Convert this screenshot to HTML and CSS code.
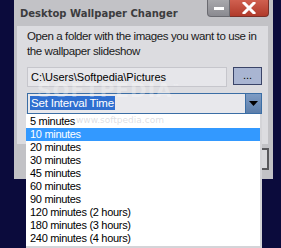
FILE: index.html
```html
<!DOCTYPE html>
<html lang="en">
<head>
    <link rel="stylesheet" href="styles.css">
    <meta charset="UTF-8">
    <title>Desktop Wallpaper Changer</title>
</head>
<body>
    <div class="window">
        <div class="titlebar">
            <div class="title">Desktop Wallpaper Changer</div>
            <div class="caption-buttons">
                <div class="btn-min"><span class="dash"></span></div>
                <div class="btn-close">
                    <svg width="14" height="12" viewBox="0 0 14 12">
                        <path d="M2 1 L12 11 M12 1 L2 11" stroke="#fff" stroke-width="3" stroke-linecap="square"/>
                    </svg>
                </div>
            </div>
        </div>
        <div class="client">
            <p class="intro">Open a folder with the images you want to use in<br>the wallpaper slideshow</p>
            <div class="folder-row">
                <div class="path">C:\Users\Softpedia\Pictures</div>
                <div class="browse">...</div>
            </div>
            <div class="combo">
                <div class="combo-text"><span class="selected">Set Interval Time</span></div>
                <div class="combo-arrow">
                    <svg width="9" height="5" viewBox="0 0 9 5"><path d="M0 0 H9 L4.5 5 Z" fill="#000"/></svg>
                </div>
            </div>
        </div>
        <div class="footer">
            <div class="footer-btn"></div>
        </div>

        <ul class="dropdown">
            <li>5 minutes</li>
            <li class="hover">10 minutes</li>
            <li>20 minutes</li>
            <li>30 minutes</li>
            <li>45 minutes</li>
            <li>60 minutes</li>
            <li>90 minutes</li>
            <li>120 minutes (2 hours)</li>
            <li>180 minutes (3 hours)</li>
            <li>240 minutes (4 hours)</li>
        </ul>

        <div class="watermark">SOFTPEDIA<sup>™</sup></div>
        <div class="watermark-url">www.softpedia.com</div>
    </div>
</body>
</html>
```

FILE: styles.css
```css
* {
    box-sizing: border-box;
}

body {
    margin: 0;
    width: 281px;
    height: 248px;
    overflow: hidden;
    background-color: #0b0b3c;
    font-family: "Liberation Sans", Arial, sans-serif;
    font-size: 11px;
    color: #000;
}

.window {
    position: relative;
    margin-left: 14px;
    width: 259px;
    height: 179px;
    background-color: #c2c2c6;
}

.titlebar {
    display: flex;
    justify-content: space-between;
    height: 26px;
}

.title {
    padding: 8px 0 0 6px;
    font-family: "DejaVu Sans", sans-serif;
    font-weight: bold;
    font-size: 10px;
    color: #3c3c3e;
}

.caption-buttons {
    display: flex;
    height: 17px;
    margin-right: 4px;
}

.btn-min {
    width: 23px;
    display: flex;
    align-items: center;
    justify-content: center;
    background: linear-gradient(#a8a8ac, #8a8a90);
    border: 1px solid #6a6a70;
    border-top: none;
    border-radius: 0 0 0 4px;
}

.dash {
    width: 10px;
    height: 3px;
    background-color: #fff;
}

.btn-close {
    width: 39px;
    display: flex;
    align-items: center;
    justify-content: center;
    background: linear-gradient(#d06050, #b03a2a);
    border: 1px solid #7a3028;
    border-top: none;
    border-left: none;
    border-radius: 0 0 4px 0;
}

.client {
    margin: 0 5px 0 3px;
    height: 118px;
    padding: 3px 0 0 10px;
    background-color: #dcdce0;
}

.intro {
    margin: 0;
    font-size: 11.5px;
    letter-spacing: -0.4px;
    line-height: 15px;
    white-space: nowrap;
    color: #1a1a1a;
}

.folder-row {
    display: flex;
    gap: 6px;
    margin-top: 8px;
}

.path {
    width: 200px;
    height: 20px;
    padding: 3px 0 0 3px;
    background-color: #e6e6ea;
    border: 1px solid #c6c6cc;
}

.browse {
    width: 29px;
    height: 18px;
    text-align: center;
    line-height: 14px;
    background-color: #a9b5d2;
    border: 1px solid #3a4468;
}

.combo {
    display: flex;
    width: 235px;
    height: 21px;
    margin-top: 6px;
    background-color: #e8e8ec;
    border: 1px solid #3b6ea5;
}

.combo-text {
    flex: 1;
    padding: 2px 0 0 2px;
}

.selected {
    display: inline-block;
    height: 14px;
    padding: 0 1px;
    line-height: 14px;
    font-size: 11.5px;
    letter-spacing: -0.2px;
    background-color: #2f6fd0;
    color: #fff;
}

.combo-arrow {
    width: 16px;
    display: flex;
    align-items: center;
    justify-content: center;
    background: linear-gradient(#7e9cc4, #5c7eaa);
    border-left: 1px solid #3b6ea5;
}

.footer {
    display: flex;
    justify-content: flex-end;
    padding: 4px 4px 0 0;
}

.footer-btn {
    width: 60px;
    height: 22px;
    border: 2px solid #58585c;
    background-color: #d8d8dc;
}

.dropdown {
    position: absolute;
    left: 12px;
    top: 114px;
    width: 236px;
    height: 134px;
    margin: 0;
    padding: 1px 0 0 0;
    list-style: none;
    background-color: #fff;
    border-right: 2px solid #d4d4d8;
    border-bottom: 2px solid #d4d4d8;
}

.dropdown li {
    height: 13px;
    line-height: 13px;
    padding-left: 4px;
    letter-spacing: -0.3px;
    white-space: nowrap;
}

.dropdown .hover {
    background-color: #3399ff;
    color: #fff;
}

.watermark {
    position: absolute;
    left: 23px;
    top: 78px;
    font-family: "DejaVu Sans", sans-serif;
    font-weight: bold;
    font-size: 20px;
    color: rgba(255, 255, 255, 0.3);
    letter-spacing: 1px;
}

.watermark sup {
    font-size: 7px;
}

.watermark-url {
    position: absolute;
    left: 62px;
    top: 115px;
    font-family: "DejaVu Sans", sans-serif;
    font-size: 9px;
    color: rgba(160, 160, 170, 0.35);
}
```
